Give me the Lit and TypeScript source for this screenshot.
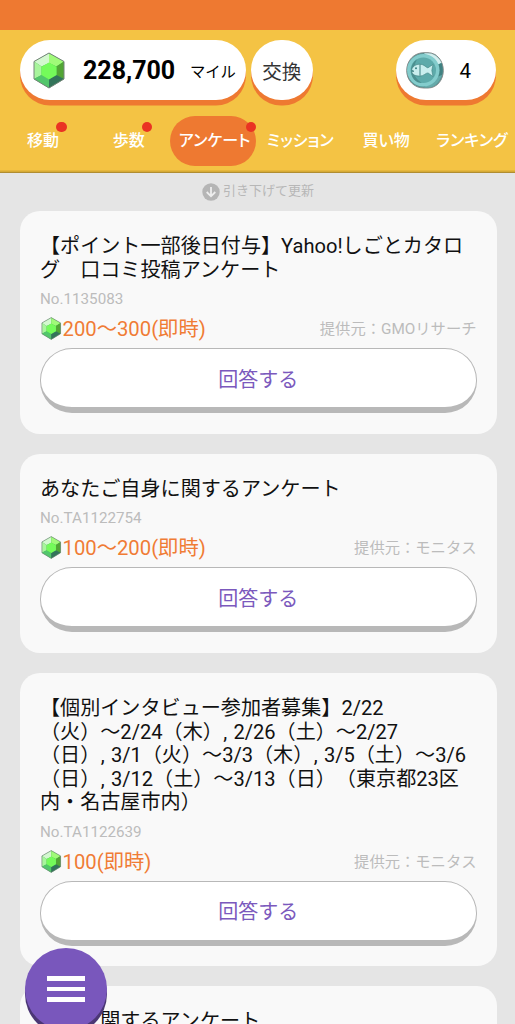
import { LitElement, html, css, svg } from "lit";
import { customElement, property } from "lit/decorators.js";

interface Tab { label: string; dot?: boolean; active?: boolean }
interface Survey { lines: string[]; no: string; reward: string; provider: string }

const tabs: Tab[] = [
  { label: "移動", dot: true },
  { label: "歩数", dot: true },
  { label: "アンケート", dot: true, active: true },
  { label: "ミッション" },
  { label: "買い物" },
  { label: "ランキング" },
];

const surveys: Survey[] = [
  { lines: ["【ポイント一部後日付与】Yahoo!しごとカタロ", "グ　口コミ投稿アンケート"], no: "No.1135083", reward: "200〜300(即時)", provider: "提供元：GMOリサーチ" },
  { lines: ["あなたご自身に関するアンケート"], no: "No.TA1122754", reward: "100〜200(即時)", provider: "提供元：モニタス" },
  {
    lines: [
      "【個別インタビュー参加者募集】2/22",
      "（火）〜2/24（木）,2/26（土）〜2/27",
      "（日）,3/1（火）〜3/3（木）,3/5（土）〜3/6",
      "（日）,3/12（土）〜3/13（日）（東京都23区",
      "内・名古屋市内）",
    ],
    no: "No.TA1122639", reward: "100(即時)", provider: "提供元：モニタス",
  },
  { lines: ["健康に関するアンケート"], no: "", reward: "", provider: "" },
];

@customElement("mile-gem")
class MileGem extends LitElement {
  static styles = css`
    :host { display: block; }
    svg { display: block; width: 100%; height: 100%; }
  `;
  render() {
    return html`<svg viewBox="0 0 32 37">${svg`
      <path d="M16 1 31 9.5V27L16 36 1 27V9.5Z" fill="#3fae50"/>
      <path d="M16 1V11L8.6 14.5 1 9.5Z" fill="#d3f8cf"/>
      <path d="M16 1 31 9.5 23.4 14.5 16 11Z" fill="#a0fa78"/>
      <path d="M1 9.5 8.6 14.5V23L1 27Z" fill="#a8f59c"/>
      <path d="M31 9.5V27L23.4 23V14.5Z" fill="#52a535"/>
      <path d="M1 27 8.6 23 16 27.3V36Z" fill="#52c66b"/>
      <path d="M31 27 23.4 23 16 27.3V36Z" fill="#33745a"/>
      <path d="M16 10.6 23.6 14.7V23L16 27.5 8.4 23V14.7Z" fill="#74fb5a"/>
      <path d="M16 1 31 9.5V27L16 36 1 27V9.5Z" fill="none" stroke="#75857a" stroke-width="1"/>`}
    </svg>`;
  }
}

@customElement("survey-card")
class SurveyCard extends LitElement {
  @property({ attribute: false }) survey!: Survey;
  static styles = css`
    :host { display: block; box-sizing: border-box; background: #f9f9f9; border-radius: 20px; padding: 24px 20px 20.5px; }
    .title { font-size: 20.1px; line-height: 23.5px; color: #111; white-space: nowrap; text-spacing-trim: space-all; }
    .line { height: 23.5px; }
    .comma { display: inline-block; width: 10.6px; box-sizing: border-box; padding-left: 0.5px; line-height: 1; }
    .no { height: 33.5px; line-height: 34.5px; font-size: 15.2px; color: #bcbcbc; }
    .meta { display: flex; align-items: center; height: 27px; padding-bottom: 5px; padding-top: 0.5px; }
    .gem { width: 20.5px; height: 23px; margin: 0 1px 2px 1px; }
    .reward { font-size: 20.3px; color: #f07c35; flex: 1; line-height: 27px; }
    .provider { font-size: 15.3px; color: #bcbcbc; line-height: 27px; }
    .button { box-sizing: border-box; width: 100%; height: 65px; border: 1px solid #b8b8b8; border-bottom-width: 6px; border-radius: 32px; background: #fff; display: flex; align-items: center; justify-content: center; font-size: 20px; color: #7b59bd; }
  `;
  render() {
    const s = this.survey;
    return html`
      <div class="title">${s.lines.map((l) => html`<div class="line">${l.split(",").map((p, i) => (i ? html`<span class="comma">,</span>${p}` : p))}</div>`)}</div>
      ${s.no
        ? html`<div class="no">${s.no}</div>
            <div class="meta"><mile-gem class="gem"></mile-gem><span class="reward">${s.reward}</span><span class="provider">${s.provider}</span></div>
            <div class="button">回答する</div>`
        : ""}`;
  }
}

@customElement("app-root")
class AppRoot extends LitElement {
  static styles = css`
    :host { display: block; position: relative; width: 515px; height: 1024px; overflow: hidden; background: #e5e5e5; font-family: Roboto, "Noto Sans CJK JP", sans-serif; }
    .status { height: 30px; background: #ee7931; }
    .header { box-sizing: border-box; height: 143px; background: #f4c344; border-bottom: 1.5px solid #b08d31; box-shadow: inset 0 -1.5px #d6aa35; padding-top: 10px; }
    .wallet { display: flex; padding: 0 19px 0 20px; height: 60px; }
    .pill { box-sizing: border-box; height: 60px; border-radius: 30px; background: #fff; box-shadow: 0 5.5px #ee7931; display: flex; align-items: center; }
    .miles { width: 226px; padding-left: 13px; }
    .miles-gem { width: 32px; height: 37px; }
    .amount { font-size: 25px; font-weight: 700; margin-left: 18px; color: #000; width: 92px; padding-top: 1px; }
    .unit { font-size: 15.3px; margin-left: 15px; color: #000; white-space: nowrap; }
    .exchange { width: 61.5px; margin-left: 5px; justify-content: center; font-size: 19.5px; color: #333; }
    .coins { width: 100px; margin-left: auto; padding-left: 10px; }
    .coin { width: 38px; height: 37px; }
    .count { font-size: 20.5px; margin-left: 15.5px; color: #000; padding-top: 2px; }
    .tabs { display: grid; grid-template-columns: repeat(6, 85.8px); height: 50.5px; margin-top: 15.5px; }
    .tab { position: relative; display: flex; justify-content: center; line-height: 49px; font-size: 16px; font-weight: 500; color: #fff; white-space: nowrap; font-feature-settings: "palt"; border-radius: 25px; }
    .active { background: #ee7931; width: 86px; margin-left: -1.5px; padding-left: 3px; box-sizing: border-box; }
    .dot { position: absolute; width: 10.6px; height: 10.6px; border-radius: 50%; background: #ea3323; top: 6px; left: 56px; }
    .active .dot { left: 75.5px; }
    .refresh { height: 38px; display: flex; align-items: center; justify-content: center; gap: 3px; font-size: 13px; line-height: 16px; color: #b7b7b7; padding-left: 1px; box-sizing: border-box; }
    .refresh svg { width: 18px; height: 18px; }
    .refresh span { padding-bottom: 2px; }
    .list { display: flex; flex-direction: column; gap: 20.3px; padding: 0 18.5px 0 20px; }
    .menu { position: absolute; left: 25px; top: 948px; width: 82px; height: 82px; border-radius: 50%; background: #7957bc; box-shadow: 0 5px #4b3775; display: flex; flex-direction: column; align-items: center; justify-content: center; gap: 5.7px; }
    .bar { width: 38.5px; height: 4.9px; background: #fff; }
  `;
  render() {
    return html`
      <div class="status"></div>
      <div class="header">
        <div class="wallet">
          <div class="pill miles"><mile-gem class="miles-gem"></mile-gem><span class="amount">228,700</span><span class="unit">マイル</span></div>
          <div class="pill exchange">交換</div>
          <div class="pill coins">
            <svg class="coin" viewBox="0 0 38 37">
              <path d="M18 .7C8 .7.7 8.5.7 18.5S8 36 18 36h4c9 0 15.3-8 15.3-17.5S31 .7 22 .7Z" fill="#4d9393" stroke="#858b8b" stroke-width="1"/>
              <path d="M22 1.2C28 1.5 33 5 35.5 11L31 13 18 1.2Z" fill="#d2eeee"/>
              <path d="M31 13 35.500 11C37 17 36.800 19 36 23l-5 2Z" fill="#408181"/>
              <path d="M31 25 36 23C33 31 29 35 22 35.500h-4Z" fill="#65aaaa"/>
              <circle cx="17.300" cy="18.300" r="16.200" fill="#83cccc"/>
              <circle cx="17.300" cy="18.300" r="12.700" fill="#5daaaa"/>
              <path d="M11 7.500C4.500 11 3 21 8 27.500c2 2.500 5 3.500 8 3.500-5-3-8-7-8-12s1-8 3-11.500Z" fill="#4b8f8f"/>
              <path d="M5.500 17.500C7 14 10 12.200 13.500 12.200c5 0 6.500 3.600 8.500 3.600l5-3.300-1.200 6 1.200 6-5-3.600c-2.500 0-4 3.200-8.500 3.200-3.500 0-6.500-1-8-4l2.500-.8Z" fill="#c9eeee" stroke="#3c8080" stroke-width=".6"/>
              <path d="M14 12.300v11.500" stroke="#3c8080" stroke-width="1"/>
              <circle cx="10" cy="16.200" r="1" fill="#3c8080"/>
            </svg>
            <span class="count">4</span>
          </div>
        </div>
        <div class="tabs">${tabs.map((t) => html`<div class="tab ${t.active ? "active" : ""}">${t.label}${t.dot ? html`<span class="dot"></span>` : ""}</div>`)}</div>
      </div>
      <div class="refresh">
        <svg viewBox="0 0 18 18"><circle cx="9" cy="9" r="8.700" fill="#b5b5b5"/><path d="M9 4v9M4.700 9 9 13.300 13.300 9" fill="none" stroke="#eee" stroke-width="1.800"/></svg>
        <span>引き下げて更新</span>
      </div>
      <div class="list">${surveys.map((s) => html`<survey-card .survey=${s}></survey-card>`)}</div>
      <div class="menu"><div class="bar"></div><div class="bar"></div><div class="bar"></div></div>`;
  }
}
